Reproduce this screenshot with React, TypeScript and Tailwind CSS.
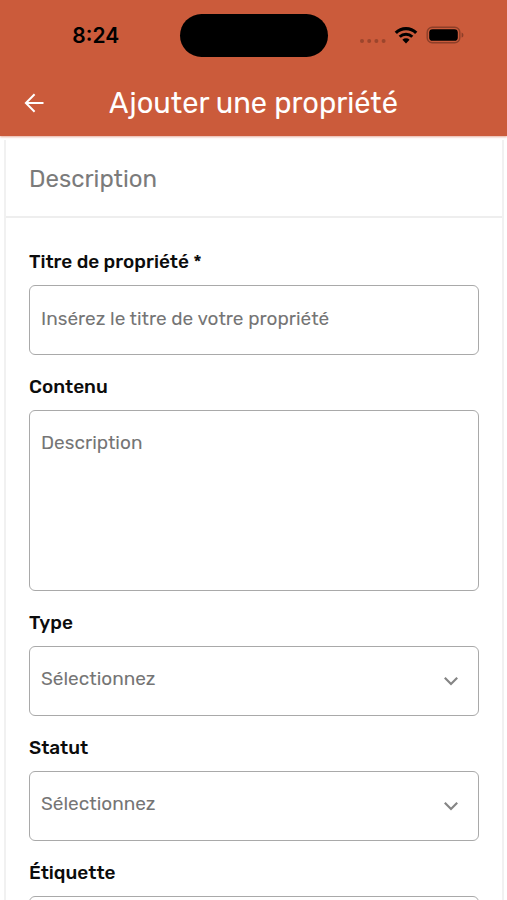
import React, { useState } from 'react';

interface FieldProps {
  id: string;
  label: string;
  children: React.ReactNode;
}

const boxClass =
  'block w-full rounded-md border border-[#a9a9a9] bg-white px-[11px] text-[19px] leading-6 focus:outline-none focus:border-[#cb5b3b]';

function Field({ id, label, children }: FieldProps) {
  return (
    <div>
      <label htmlFor={id} className="block mb-[11px] text-[19px] leading-6 font-medium text-[#0c0c0c]">
        {label}
      </label>
      {children}
    </div>
  );
}

function SelectField({ id, label }: { id: string; label: string }) {
  return (
    <Field id={id} label={label}>
      <div className="grid items-center">
        <select
          id={id}
          defaultValue=""
          className={`${boxClass} col-start-1 row-start-1 h-[70px] appearance-none pb-1 text-[#757575]`}
        >
          <option value="">Sélectionnez</option>
        </select>
        <svg
          viewBox="0 0 16 10"
          className="pointer-events-none col-start-1 row-start-1 mr-5 h-[10px] w-4 justify-self-end"
          fill="none"
          stroke="#858585"
          strokeWidth="2.2"
          aria-hidden="true"
        >
          <path d="M1.8 1.8 8 8l6.2-6.2" />
        </svg>
      </div>
    </Field>
  );
}

function StatusBar() {
  return (
    <div className="grid grid-cols-[1fr_148px_1fr] items-center pt-3.5 text-black">
      <span className="justify-self-center pl-3 font-['Inter',sans-serif] text-[21px] leading-6 font-semibold">
        8:24
      </span>
      <div className="h-[43px] rounded-full bg-black" />
      <div className="flex items-center justify-end pr-[43px] pb-0.5">
        <svg viewBox="0 0 26 6" className="mt-3 mr-2 h-[6px] w-[26px]" fill="#9c452c" aria-hidden="true">
          <circle cx="2" cy="3" r="2" />
          <circle cx="9.2" cy="3" r="2" />
          <circle cx="16.4" cy="3" r="2" />
          <circle cx="23.6" cy="3" r="2" />
        </svg>
        <svg viewBox="0 0 24 18" className="mr-2 h-[18px] w-6" fill="none" stroke="#000" aria-hidden="true">
          <path d="M1.8 6.8a14.4 14.4 0 0 1 20.4 0" strokeWidth="3.2" />
          <path d="M5.7 10.7a9 9 0 0 1 12.6 0" strokeWidth="3" />
          <path d="M12 17.4 8.4 13.8a5.1 5.1 0 0 1 7.2 0z" fill="#000" stroke="none" />
        </svg>
        <svg viewBox="0 0 38 18" className="h-[18px] w-[38px]" aria-hidden="true">
          <rect x="1.2" y="1.2" width="32.6" height="15.6" rx="5" fill="none" stroke="#8d3f29" strokeWidth="1.4" />
          <rect x="3.2" y="3.2" width="28.6" height="11.6" rx="3.4" fill="#000" />
          <path d="M35.6 6.4c2.4.9 2.4 4.3 0 5.2z" fill="#8d3f29" />
        </svg>
      </div>
    </div>
  );
}

export default function App() {
  const [title, setTitle] = useState('');
  const [content, setContent] = useState('');

  return (
    <div className="h-screen overflow-hidden bg-white font-['Rubik','Inter',sans-serif]">
      <header className="bg-[#cb5b3b] shadow-[0_1px_2px_rgba(203,91,59,0.5)]">
        <StatusBar />
        <div className="grid grid-cols-[54px_1fr_54px] items-center pt-[26px] pb-[13px]">
          <button type="button" aria-label="Retour" className="ml-6 w-5">
            <svg viewBox="0 0 20 20" className="h-5 w-5" fill="none" stroke="#fff" strokeWidth="2" aria-hidden="true">
              <path d="M19.5 10H2M10.6 1.3 1.9 10l8.7 8.7" />
            </svg>
          </button>
          <h1 className="text-center text-[29px] leading-10 text-white">Ajouter une propriété</h1>
        </div>
      </header>

      <form className="mt-1 mr-[3px] ml-1 border-x-2 border-[#f1f1f1]">
        <h2 className="border-b-2 border-[#eeeeee] pt-[23px] pb-[21px] pl-[23px] text-2xl leading-8 text-[#7b7b7b]">
          Description
        </h2>
        <div className="flex flex-col gap-5 px-[23px] pt-8">
          <Field id="title" label="Titre de propriété *">
            <input
              id="title"
              type="text"
              value={title}
              onChange={(e) => setTitle(e.target.value)}
              placeholder="Insérez le titre de votre propriété"
              className={`${boxClass} h-[70px] pb-1 placeholder:text-[#757575]`}
            />
          </Field>
          <Field id="content" label="Contenu">
            <textarea
              id="content"
              value={content}
              onChange={(e) => setContent(e.target.value)}
              placeholder="Description"
              className={`${boxClass} h-[181px] resize-none pt-5 placeholder:text-[#757575]`}
            />
          </Field>
          <SelectField id="type" label="Type" />
          <SelectField id="status" label="Statut" />
          <SelectField id="tag" label="Étiquette" />
        </div>
      </form>
    </div>
  );
}
